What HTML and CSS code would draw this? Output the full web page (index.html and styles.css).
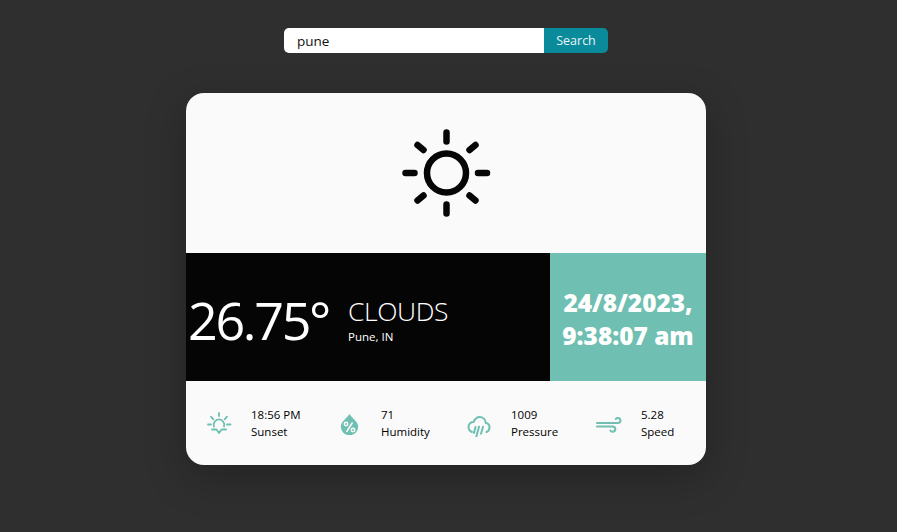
FILE: index.html
```html
<!DOCTYPE html>
<html>
<head>
    <title>Weather</title>
    <link rel="stylesheet" href="styles.css">
</head>
<body>
    <div class="search">
        <input type="search" class="searchInput" value="pune">
        <button class="searchBtn">Search</button>
    </div>
    <article class="card">
        <div class="iconBox">
            <svg viewBox="0 0 90 90" width="90" height="90">
                <g fill="none" stroke="#060606" stroke-linecap="round">
                    <circle cx="45.500" cy="45" r="19.500" stroke-width="6.500"/>
                    <path stroke-width="6.500" d="M45.500 4.500v9M45.500 76.500v9M4.500 45h9M77 45h9M16.500 17l6 5M68.500 22l6-5M16.500 72.500l6-5M68.500 67.500l6 5"/>
                </g>
            </svg>
        </div>
        <div class="middle">
            <div class="mainInfo">
                <div class="temp">26.75°</div>
                <div class="desc">
                    <div class="cond">CLOUDS</div>
                    <div class="place">Pune, IN</div>
                </div>
            </div>
            <div class="dateBox">24/8/2023,<br>9:38:07 am</div>
        </div>
        <div class="extra">
            <div class="item">
                <div class="itemIcon">
                    <svg viewBox="0 0 28 24" width="28" height="24">
                        <g fill="none" stroke="#6fbfb2" stroke-width="1.800" stroke-linecap="round" stroke-linejoin="round">
                            <path d="M9 15.500a5.300 5.300 0 1 1 10 0"/>
                            <path d="M14 2v3M6 5.700l2.300 2.600M22 5.700l-2.300 2.600M3 13.500h3M22 13.500h3.500M7 18.500h4.500l2.500 3.500 2.500-3.500H21"/>
                        </g>
                    </svg>
                </div>
                <div class="itemText">18:56 PM<br>Sunset</div>
            </div>
            <div class="item">
                <div class="itemIcon">
                    <svg viewBox="0 0 24 24" width="24" height="24">
                        <path fill="#6fbfb2" d="M12.500 3C9.500 7.500 3.800 11 3.800 15.500a8.700 8.700 0 0 0 17.400 0C21.200 11 15.500 7.500 12.500 3z"/>
                        <g fill="none" stroke="#fafafa" stroke-width="1.500">
                            <path d="M15.500 11.500l-6 9.500"/>
                            <circle cx="9" cy="13" r="1.700"/>
                            <circle cx="16" cy="19" r="1.700"/>
                        </g>
                    </svg>
                </div>
                <div class="itemText">71<br>Humidity</div>
            </div>
            <div class="item">
                <div class="itemIcon">
                    <svg viewBox="0 -2 26 28" width="26" height="28">
                        <g fill="none" stroke="#6fbfb2" stroke-width="2" stroke-linecap="round" stroke-linejoin="round">
                            <path d="M6 21C3.500 20 2.500 18 2.500 15.800 2.500 12.800 5 10.800 7.500 11 9 8 11 6 13.500 6c3.500 0 6 2.500 6.300 6 2.200.3 3.700 2 3.700 4.300 0 2.200-1.300 4-3 4.700"/>
                            <path d="M9.500 16l-1.500 6M13 15.700L10.200 26M17 15.700l-2 7"/>
                        </g>
                    </svg>
                </div>
                <div class="itemText">1009<br>Pressure</div>
            </div>
            <div class="item">
                <div class="itemIcon">
                    <svg viewBox="0 -2 26 20" width="26" height="20">
                        <g fill="none" stroke="#6fbfb2" stroke-width="2" stroke-linecap="round">
                            <path d="M1 8h20.500c2 0 3-1.200 3-2.500S23.500 3 21.800 3c-.8 0-1.500.3-2 .9"/>
                            <path d="M1 11.500h15.500c1.800 0 2.800 1.100 2.800 2.500s-1 2.800-2.700 2.800c-1 0-1.800-.4-2.200-1.200"/>
                        </g>
                    </svg>
                </div>
                <div class="itemText">5.28<br>Speed</div>
            </div>
        </div>
    </article>
</body>
</html>
```

FILE: styles.css
```css
body {
    margin: 0;
    padding-right: 5px;
    height: 532px;
    background-color: #2f2f2f;
    font-family: 'Open Sans', 'Noto Sans', sans-serif;
    overflow: hidden;
}
.search {
    display: flex;
    width: 324px;
    height: 25px;
    margin: 0 auto;
    padding: 28px 0 40px;
}
.searchInput {
    box-sizing: border-box;
    width: 260px;
    height: 25px;
    margin: 0;
    padding: 0 13px;
    border: none;
    outline: none;
    border-radius: 5px 0 0 5px;
    background: #fff;
    color: #111;
    font-family: inherit;
    font-size: 13.500px;
}
.searchBtn {
    width: 64px;
    height: 25px;
    padding: 0;
    border: none;
    border-radius: 0 5px 5px 0;
    background: #0a8b9c;
    color: #e8f6f7;
    font-family: inherit;
    font-size: 12.500px;
}
.card {
    width: 520px;
    height: 372px;
    margin: 0 auto;
    border-radius: 18px;
    overflow: hidden;
    background: #fafafa;
    box-shadow: 0 12px 40px rgba(0, 0, 0, 0.25);
}
.iconBox {
    display: flex;
    justify-content: center;
    align-items: center;
    height: 160px;
}
.middle {
    display: flex;
    height: 128px;
}
.mainInfo {
    display: flex;
    align-items: center;
    width: 364px;
    background: #060505;
    color: #fff;
}
.temp {
    width: 160px;
    padding: 4px 0 0 2px;
    font-size: 52px;
    font-weight: 400;
    letter-spacing: -2.300px;
    white-space: nowrap;
}
.desc {
    padding-top: 9px;
}
.cond {
    font-size: 26.500px;
    font-weight: 300;
    line-height: 30px;
    letter-spacing: -0.400px;
}
.place {
    font-size: 11.500px;
    line-height: 22px;
}
.dateBox {
    display: flex;
    flex: 1;
    align-items: center;
    justify-content: center;
    padding-top: 3px;
    background: #6fbfb2;
    color: #fff;
    font-size: 24.400px;
    font-weight: 800;
    line-height: 33px;
    text-align: center;
}
.extra {
    display: grid;
    grid-template-columns: repeat(4, 130px);
    height: 84px;
}
.item {
    display: flex;
    align-items: center;
}
.itemIcon {
    display: flex;
    justify-content: center;
    width: 65px;
}
.itemText {
    color: #000;
    font-size: 11.500px;
    line-height: 17px;
}
```
